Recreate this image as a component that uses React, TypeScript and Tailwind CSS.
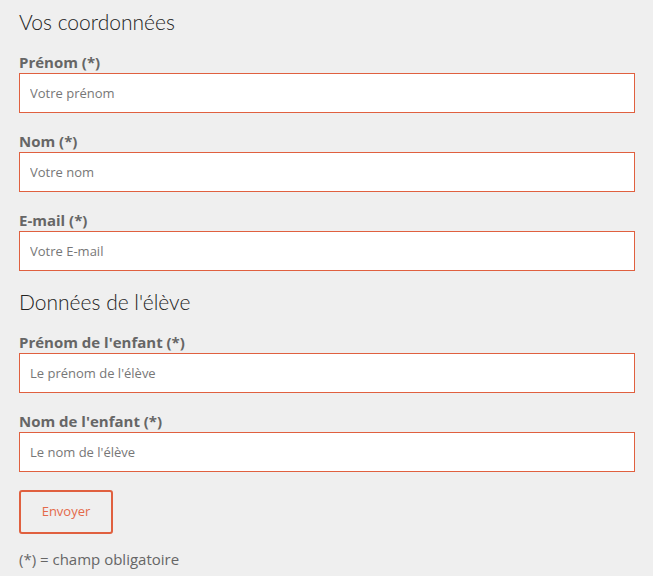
import React from "react";

const fields1 = [
  { label: "Prénom (*)", placeholder: "Votre prénom" },
  { label: "Nom (*)", placeholder: "Votre nom" },
  { label: "E-mail (*)", placeholder: "Votre E-mail" },
];

const fields2 = [
  { label: "Prénom de l'enfant (*)", placeholder: "Le prénom de l'élève" },
  { label: "Nom de l'enfant (*)", placeholder: "Le nom de l'élève" },
];

function Field({ label, placeholder }: { label: string; placeholder: string }) {
  return (
    <div className="flex flex-col">
      <label className="text-[15px] leading-[20px] font-bold text-[#666]">{label}</label>
      <input
        type="text"
        placeholder={placeholder}
        className="mt-px h-10 w-full border border-[#e0603f] bg-white px-[10px] text-[13px] text-[#555] placeholder:text-[#777] outline-none"
      />
    </div>
  );
}

export default function App() {
  return (
    <div className="min-h-[576px] bg-[#efefef] pl-[19px] pr-[18px] pt-[8px] font-['Open_Sans',sans-serif]">
      <h2 className="font-['Lato',sans-serif] text-[21px] leading-[28px] font-light text-[#222]">
        Vos coordonnées
      </h2>
      <div className="mt-4 flex flex-col gap-[18px]">
        {fields1.map((f) => (
          <Field key={f.label} {...f} />
        ))}
      </div>
      <h2 className="mt-[17px] font-['Lato',sans-serif] text-[21px] leading-[28px] font-light text-[#222]">
        Données de l'élève
      </h2>
      <div className="mt-4 flex flex-col gap-[18px]">
        {fields2.map((f) => (
          <Field key={f.label} {...f} />
        ))}
      </div>
      <button className="mt-[18px] h-11 w-[94px] rounded-[3px] border-2 border-[#e0603f] text-[13px] text-[#e4694a]">
        Envoyer
      </button>
      <p className="mt-[15px] text-[15px] leading-[20px] text-[#666]">(*) = champ obligatoire</p>
    </div>
  );
}
